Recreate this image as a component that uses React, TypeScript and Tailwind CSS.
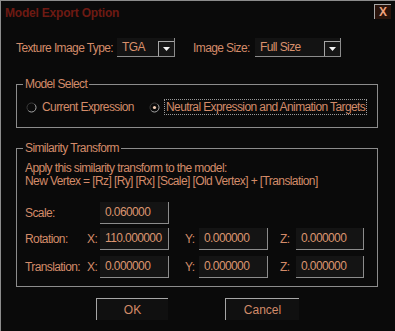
import type { ReactNode } from 'react';

const Radio = ({ checked }: { checked?: boolean }) => (
  <svg width="11" height="11" viewBox="0 0 11 11" className="shrink-0">
    <path d="M2.3 8.7 A4.5 4.5 0 0 1 8.7 2.3" stroke="#3c3c3c" strokeWidth="1" fill="none" />
    <path d="M8.7 2.3 A4.5 4.5 0 0 1 2.3 8.7" stroke="#a8a8a8" strokeWidth="1" fill="none" />
    {checked && <circle cx="5.5" cy="5.5" r="1.6" fill="#f2cdb4" />}
  </svg>
);

const Combo = ({ value, width }: { value: string; width: string }) => (
  <div className={`flex h-[19px] ${width} items-end justify-between border-r border-b border-[#8c8c8c] bg-[#131313]`}>
    <span className="self-center pl-[5px] text-[#d9906c]">{value}</span>
    <span className="flex h-[15px] w-[16px] items-center justify-center border-l border-t border-[#a6a6a6] bg-[#161616]">
      <svg width="7" height="4" viewBox="0 0 7 4">
        <path d="M0 0h7L3.5 4z" fill="#f4f4f4" />
      </svg>
    </span>
  </div>
);

const Field = ({ value, width = 'w-[69px]' }: { value: string; width?: string }) => (
  <div className={`h-[22px] ${width} border-r border-b border-[#8c8c8c] bg-[#141414] pl-[5px] leading-[21px] text-[#dc946f]`}>
    {value}
  </div>
);

const Group = ({ title, className, children }: { title: string; className: string; children: ReactNode }) => (
  <fieldset className={`ml-[15px] w-[362px] border border-[#8c8c8c] pl-[6px] ${className}`}>
    <legend className="px-[2px] leading-[14px]">{title}</legend>
    {children}
  </fieldset>
);

export default function App() {
  return (
    <div className="flex h-[331px] w-[395px] flex-col border-l border-t border-[#8c8c8c] bg-[#0a0a0a] font-['Liberation_Sans',Arial,sans-serif] text-[12px] leading-[14px] tracking-[-0.6px] text-[#d38b69]">
      {/* title bar */}
      <div className="flex h-[22px] items-start justify-between">
        <span className="pl-[4px] pt-[5px] font-bold tracking-[-0.2px] text-[#6e1a13]">Model Export Option</span>
        <span className="mr-[4px] mt-[3px] flex h-[15px] w-[17px] items-center justify-center border-l border-t border-[#a6a6a6] bg-[#2a140c] text-[12px] font-bold leading-none tracking-normal text-[#f0a27e]">
          X
        </span>
      </div>

      {/* texture / size */}
      <div className="mt-[15px] flex items-center pl-[15px]">
        <span className="w-[101px]">Texture Image Type:</span>
        <Combo value="TGA" width="w-[58px]" />
        <span className="ml-[18px] w-[62px]">Image Size:</span>
        <Combo value="Full Size" width="w-[86px]" />
      </div>

      <Group title="Model Select" className="mt-[20px] h-[51px]">
        <div className="mt-[8px] flex items-center">
          <div className="ml-[3px] flex w-[123px] items-center gap-[5px]">
            <Radio />
            <span>Current Expression</span>
          </div>
          <Radio checked />
          <span className="ml-[4px] border border-dotted border-[#9a9a9a] pl-[1px] pr-[1px]">
            Neutral Expression and Animation Targets
          </span>
        </div>
      </Group>

      <Group title="Similarity Transform" className="mt-[13px] h-[146px]">
        <div className="ml-[2px] mt-[7px] leading-[13px]">
          <p>Apply this similarity transform to the model:</p>
          <p>New Vertex = [Rz] [Ry] [Rx] [Scale] [Old Vertex] + [Translation]</p>
        </div>
        <div className="ml-[2px] mt-[14px] flex items-center">
          <span className="w-[75px]">Scale:</span>
          <Field value="0.060000" />
        </div>
        <div className="ml-[2px] mt-[4px] flex items-center">
          <span className="w-[62px]">Rotation:</span>
          <span className="w-[13px]">X:</span>
          <Field value="110.000000" />
          <span className="ml-[16px] w-[14px]">Y:</span>
          <Field value="0.000000" />
          <span className="ml-[12px] w-[16px]">Z:</span>
          <Field value="0.000000" width="w-[68px]" />
        </div>
        <div className="ml-[2px] mt-[6px] flex items-center">
          <span className="w-[62px]">Translation:</span>
          <span className="w-[13px]">X:</span>
          <Field value="0.000000" />
          <span className="ml-[16px] w-[14px]">Y:</span>
          <Field value="0.000000" />
          <span className="ml-[12px] w-[16px]">Z:</span>
          <Field value="0.000000" width="w-[68px]" />
        </div>
      </Group>

      <div className="mt-[11px] flex">
        <button type="button" className="ml-[95px] h-[22px] w-[72px] border-l border-t border-[#a6a6a6] bg-[#101010] tracking-normal text-[#d38b69]">
          OK
        </button>
        <button type="button" className="ml-[57px] h-[22px] w-[74px] border-l border-t border-[#a6a6a6] bg-[#101010] tracking-normal text-[#d38b69]">
          Cancel
        </button>
      </div>
    </div>
  );
}
